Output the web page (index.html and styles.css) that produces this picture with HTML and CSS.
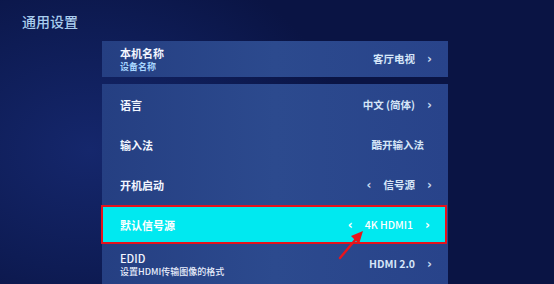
FILE: index.html
```html
<!DOCTYPE html>
<html lang="zh">
<head>
<meta charset="utf-8">
<link rel="stylesheet" href="styles.css">
</head>
<body>
<div class="screen">
  <h1 class="title">通用设置</h1>
  <div class="panel">
    <div class="card top">
      <div class="row two">
        <div class="labels">
          <div class="label">本机名称</div>
          <div class="sub">设备名称</div>
        </div>
        <div class="value">客厅电视<span class="chev">›</span></div>
      </div>
    </div>
    <div class="card list">
      <div class="row">
        <div class="label">语言</div>
        <div class="value">中文 (简体)<span class="chev">›</span></div>
      </div>
      <div class="row">
        <div class="label">输入法</div>
        <div class="value nochev">酷开输入法</div>
      </div>
      <div class="row">
        <div class="label">开机启动</div>
        <div class="value"><span class="chev l">‹</span>信号源<span class="chev">›</span></div>
      </div>
      <div class="row active">
        <div class="label">默认信号源</div>
        <div class="value"><span class="chev l">‹</span>4K HDMI1<span class="chev">›</span></div>
        <svg class="arrow" width="30" height="32" viewBox="0 0 30 32">
          <path d="M3 29 L19 10" stroke="#e8141c" stroke-width="2.4" stroke-linecap="round"/>
          <path d="M26 2 L14 7 L22 15 Z" fill="#e8141c"/>
        </svg>
      </div>
      <div class="row two">
        <div class="labels">
          <div class="label thin">EDID</div>
          <div class="sub white">设置HDMI传输图像的格式</div>
        </div>
        <div class="value">HDMI 2.0<span class="chev">›</span></div>
      </div>
    </div>
  </div>
</div>
</body>
</html>
```
FILE: styles.css
```css
* { box-sizing: border-box; margin: 0; padding: 0; }
html, body { width: 554px; height: 284px; overflow: hidden; }
body {
  font-family: "Noto Sans CJK SC", "Noto Sans", sans-serif;
  background: radial-gradient(ellipse 260px 200px at 90px 150px, #15276c 0%, #0e1c55 60%, #0a1444 100%);
  color: #fff;
}
.screen { position: relative; width: 554px; height: 284px; padding-top: 12px; }
.title {
  font-size: 14px;
  font-weight: 500;
  color: #a9cdee;
  line-height: 18px;
  margin-left: 22px;
}
.panel {
  margin-left: 102px;
  width: 346px;
  margin-top: 11px;
  display: flex;
  flex-direction: column;
  gap: 7px;
}
.card {
  background: linear-gradient(90deg, #253f82 0%, #2c4a8e 50%, #28438a 100%);
}
.top { height: 36px; }
.list { height: 200px; padding-top: 1px; }
.row {
  position: relative;
  height: 40px;
  display: flex;
  align-items: center;
  justify-content: space-between;
  padding-left: 18px;
  padding-right: 16px;
}
.top .row { height: 36px; }
.label {
  font-size: 11px;
  font-weight: 700;
  line-height: 14px;
  color: #f2f6ff;
}
.label.thin { font-weight: 500; }
.sub {
  font-size: 9px;
  font-weight: 700;
  line-height: 13px;
  color: #a8d6ff;
}
.sub.white { color: #e8eefc; font-weight: 500; }
.labels { display: flex; flex-direction: column; }
.value {
  display: flex;
  align-items: center;
  font-size: 10.5px;
  font-weight: 700;
  color: #d6e6f8;
  line-height: 14px;
}
.value.nochev { margin-right: 8px; }
.chev {
  font-family: "DejaVu Sans", sans-serif;
  font-size: 12px;
  font-weight: 700;
  margin-left: 12px;
  color: #c8daf0;
}
.chev.l { margin-left: 0; margin-right: 12px; }
.active {
  background: #00e9f0;
  border: 2px solid #e3121c;
  margin-left: -1px;
  margin-right: 1px;
  height: 39px;
  padding-left: 17px;
  padding-right: 15px;
}
.active .label, .active .value, .active .chev { color: #ffffff; }
.active .value { font-weight: 500; }
.arrow {
  position: absolute;
  left: 234px;
  top: 22px;
}
```
